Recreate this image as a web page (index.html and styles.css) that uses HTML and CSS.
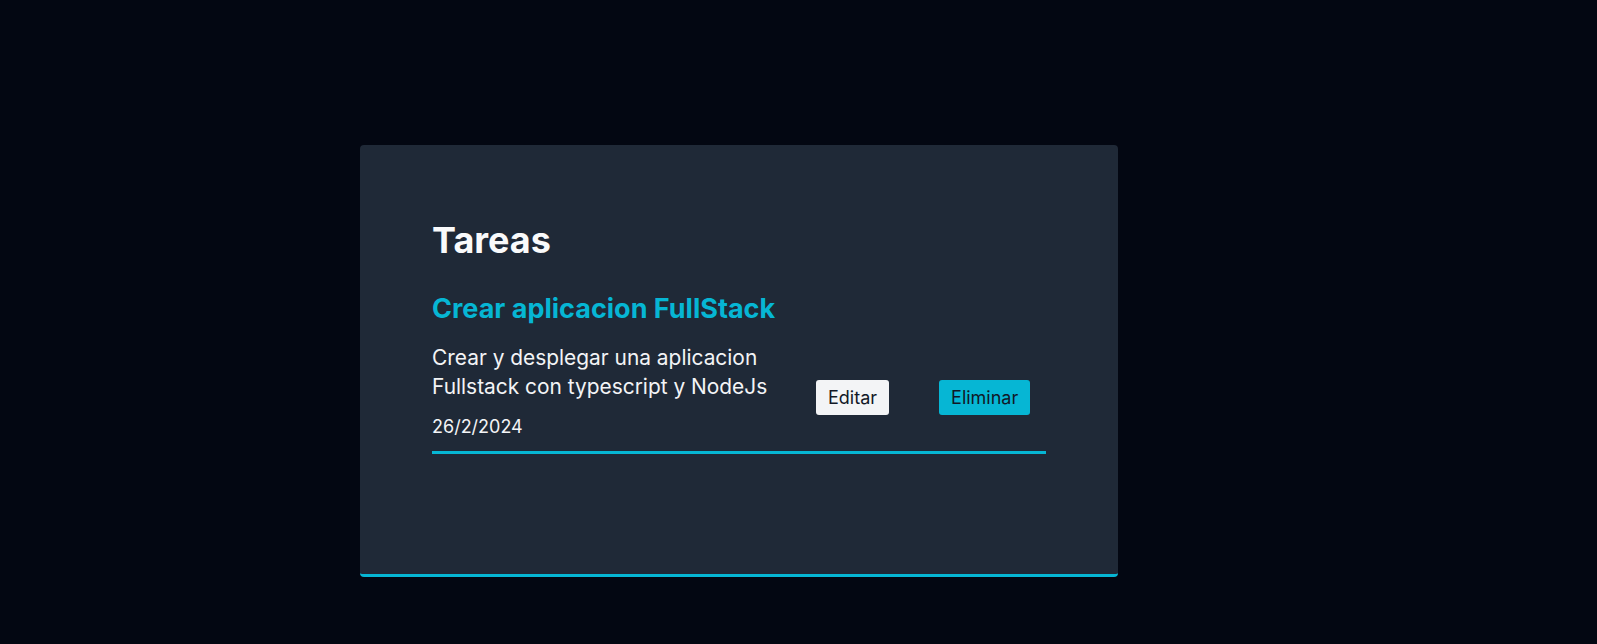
FILE: index.html
```html
<!DOCTYPE html>
<html lang="es">
<head>
<meta charset="utf-8">
<title>Tareas</title>
<link rel="stylesheet" href="styles.css">
</head>
<body>
<main class="page">
  <section class="card">
    <h1 class="card-title">Tareas</h1>
    <article class="task">
      <h2 class="task-title">Crear aplicacion FullStack</h2>
      <div class="task-row">
        <div class="task-text">
          <p class="task-desc">Crear y desplegar una aplicacion Fullstack con typescript y NodeJs</p>
          <p class="task-date">26/2/2024</p>
        </div>
        <div class="task-actions">
          <button class="btn btn-edit">Editar</button>
          <button class="btn btn-delete">Eliminar</button>
        </div>
      </div>
    </article>
  </section>
</main>
</body>
</html>
```

FILE: styles.css
```css
* {
  box-sizing: border-box;
}

html, body {
  margin: 0;
  padding: 0;
  background: #030712;
  height: 100%;
}

body {
  font-family: Inter, "Noto Sans", "DejaVu Sans", sans-serif;
  color: #f3f4f6;
}

.page {
  padding: 145px 0 0 360px;
}

.card {
  width: 758px;
  background: #1f2937;
  border-radius: 4px;
  border-bottom: 3px solid #06b6d4;
  padding: 75px 72px 120px 72px;
}

.card-title {
  margin: 0 0 33px 0;
  font-size: 36px;
  line-height: 40px;
  font-weight: 700;
  color: #f9fafb;
}

.task {
  border-bottom: 3px solid #06b6d4;
  padding-bottom: 10px;
}

.task-title {
  margin: 0 0 18px 0;
  font-size: 27px;
  line-height: 32px;
  font-weight: 700;
  color: #06b6d4;
}

.task-row {
  display: flex;
  align-items: center;
}

.task-text {
  width: 350px;
}

.task-desc {
  margin: 0;
  font-size: 20.9px;
  line-height: 29px;
}

.task-date {
  margin: 12px 0 0 0;
  font-size: 18px;
  line-height: 28px;
}

.task-actions {
  display: flex;
  gap: 50px;
  margin-left: 34px;
  margin-top: 10px;
}

.btn {
  font-family: Inter, "Noto Sans", "DejaVu Sans", sans-serif;
  font-size: 18px;
  line-height: 27px;
  padding: 4px 12px;
  border: none;
  border-radius: 3px;
  color: #111827;
  cursor: pointer;
}

.btn-edit {
  background: #f3f4f6;
}

.btn-delete {
  background: #06b6d4;
}
```
